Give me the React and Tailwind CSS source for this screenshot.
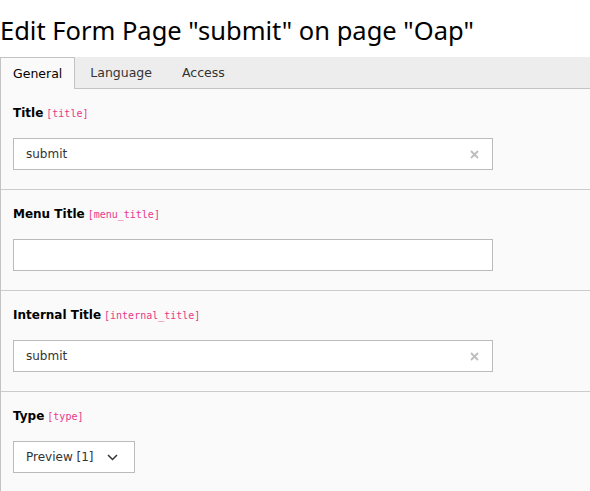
const fields = [
  { label: 'Title', name: 'title', value: 'submit', clear: true },
  { label: 'Menu Title', name: 'menu_title', value: '', clear: false },
  { label: 'Internal Title', name: 'internal_title', value: 'submit', clear: true },
];

const tabs = ['General', 'Language', 'Access'];

function FieldLabel({ label, name }) {
  return (
    <div className="flex items-baseline gap-[3px] h-[18px] leading-[18px]">
      <span className="text-[12px] font-bold text-black">{label}</span>
      <span className="text-[10px] text-[#e8388b] font-['DejaVu_Sans_Mono',monospace]">[{name}]</span>
    </div>
  );
}

function TextField({ label, name, value, clear }) {
  return (
    <div className="border-t border-[#cccccc] pt-[15px] pb-[19px] pl-[12px] first:border-t-0">
      <FieldLabel label={label} name={name} />
      <div className="mt-[16px] w-[480px] h-[32px] border border-[#bbbbbb] bg-white flex items-center pl-[12px] pr-[13px]">
        <span className="flex-1 text-[12px] text-[#333]">{value}</span>
        {clear && (
          <svg width="9" height="9" viewBox="0 0 9 9">
            <path d="M1 1L8 8M8 1L1 8" stroke="#bdbdbd" strokeWidth="1.8" />
          </svg>
        )}
      </div>
    </div>
  );
}

export default function App() {
  return (
    <div className="w-[590px] h-[491px] overflow-hidden bg-white font-['DejaVu_Sans',Verdana,sans-serif]">
      <h1 className="font-['Noto_Sans',sans-serif] text-[25.5px] leading-[31px] text-black pt-[15px] pb-[11px] whitespace-nowrap">
        Edit Form Page "submit" on page "Oap"
      </h1>
      <div className="flex bg-[#ededed] h-[32px] border-b border-[#c3c3c3] w-[600px]">
        {tabs.map((t, i) => (
          <div
            key={t}
            className={
              i === 0
                ? 'h-[32px] px-[12px] pt-px bg-[#fafafa] border border-b-0 border-[#c3c3c3] text-[12.5px] text-black flex items-center -mb-px'
                : 'h-[31px] px-[15px] pt-px text-[12.5px] text-[#333] flex items-center'
            }
          >
            {t}
          </div>
        ))}
      </div>
      <div className="bg-[#fafafa] border-l border-[#c3c3c3] w-[600px]">
        {fields.map((f) => (
          <TextField key={f.name} {...f} />
        ))}
        <div className="border-t border-[#cccccc] pt-[15px] pb-[19px] pl-[12px]">
          <FieldLabel label="Type" name="type" />
          <div className="mt-[16px] w-[122px] h-[32px] border border-[#bbbbbb] bg-white flex items-center pl-[12px] gap-[13px]">
            <span className="text-[12px] text-[#333]">Preview [1]</span>
            <svg width="11" height="7" viewBox="0 0 11 7">
              <path d="M1 1L5.5 5.5L10 1" fill="none" stroke="#333" strokeWidth="1.5" />
            </svg>
          </div>
        </div>
      </div>
    </div>
  );
}
